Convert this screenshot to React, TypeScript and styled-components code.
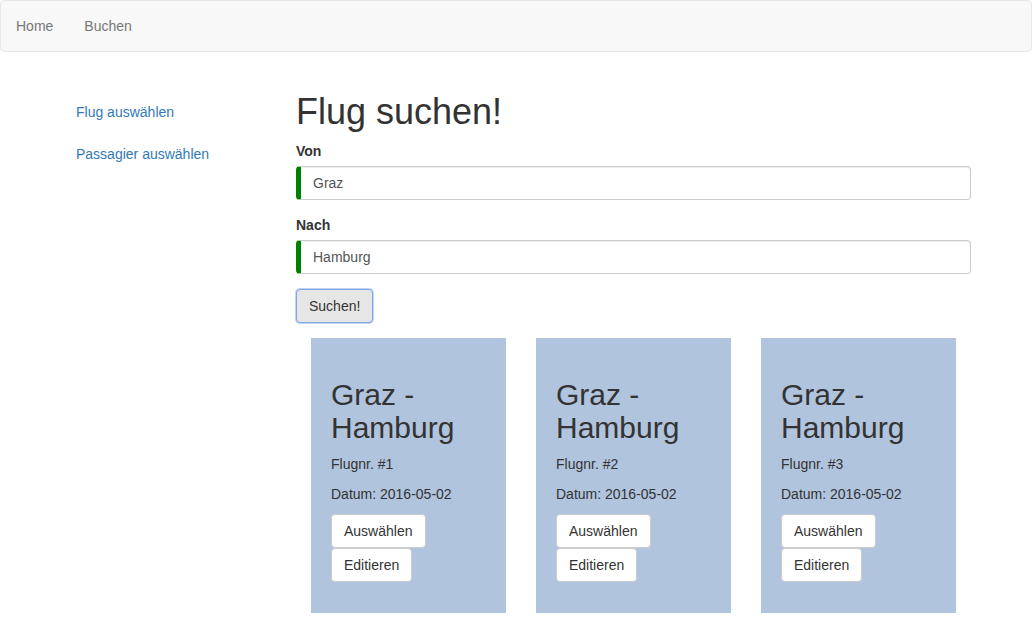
import React from "react";
import styled, { createGlobalStyle } from "styled-components";

const Global = createGlobalStyle`
  html, body { margin: 0; padding: 0; background: #fff; }
  body {
    font-family: "Liberation Sans", Arial, Helvetica, sans-serif;
    font-size: 14px;
    line-height: 1.42857143;
    color: #333;
  }
  * { box-sizing: border-box; }
`;

const Navbar = styled.nav`
  display: flex;
  align-items: stretch;
  min-height: 52px;
  background: #f8f8f8;
  border: 1px solid #e7e7e7;
  border-radius: 4px;
  margin-bottom: 20px;
`;

const NavList = styled.div`
  display: flex;
  gap: 1px;
`;

const NavLink = styled.a`
  display: block;
  padding: 15px;
  line-height: 20px;
  color: #777;
  text-decoration: none;
`;

const Layout = styled.div`
  display: grid;
  grid-template-columns: 235px 675px;
  padding-left: 61px;
`;

const Sidebar = styled.ul`
  list-style: none;
  margin: 20px 0 0;
  padding: 0;
  display: flex;
  flex-direction: column;
  gap: 2px;
`;

const PillLink = styled.a`
  display: block;
  padding: 10px 15px;
  line-height: 20px;
  color: #337ab7;
  text-decoration: none;
`;

const Main = styled.main`
  display: flex;
  flex-direction: column;
`;

const Title = styled.h1`
  font-size: 36px;
  font-weight: 500;
  line-height: 1.1;
  margin: 20px 0 9px;
`;

const FormGroup = styled.div`
  margin-bottom: 15px;
`;

const Label = styled.label`
  display: inline-block;
  margin-bottom: 5px;
  font-weight: bold;
`;

const Input = styled.input`
  display: block;
  width: 100%;
  height: 34px;
  padding: 6px 12px;
  font-family: inherit;
  font-size: 14px;
  line-height: 1.42857143;
  color: #555;
  background: #fff;
  border: 1px solid #ccc;
  border-left: 5px solid #008000;
  border-radius: 4px;
  box-shadow: inset 0 1px 1px rgba(0, 0, 0, 0.075);
  outline: none;
`;

const SearchButton = styled.button`
  align-self: flex-start;
  height: 34px;
  padding: 6px 12px;
  font-family: inherit;
  font-size: 14px;
  line-height: 1.42857143;
  color: #333;
  background: #e6e6e6;
  border: 1px solid #7ea7e8;
  border-radius: 4px;
  box-shadow: 0 0 0 1px rgba(120, 160, 230, 0.45);
`;

const Cards = styled.div`
  display: flex;
  margin-top: 15px;
`;

const Card = styled.div`
  flex: 0 0 195px;
  width: 195px;
  margin: 0 15px;
  padding: 20px 20px 21px;
  background: #b0c4de;
`;

const CardTitle = styled.h2`
  font-size: 30px;
  font-weight: 500;
  line-height: 1.1;
  margin: 20px 0 10px;
`;

const CardText = styled.p`
  margin: 0 0 10px;
`;

const CardActions = styled.div`
  display: flex;
  flex-direction: column;
  align-items: flex-start;
  margin-bottom: 10px;
`;

const CardButton = styled.button`
  height: 34px;
  padding: 6px 12px;
  font-family: inherit;
  font-size: 14px;
  line-height: 1.42857143;
  color: #333;
  background: #fff;
  border: 1px solid #ccc;
  border-radius: 4px;
`;

const flights = [1, 2, 3];

export default function App() {
  return (
    <>
      <Global />
      <Navbar>
        <NavList>
          <NavLink href="#">Home</NavLink>
          <NavLink href="#">Buchen</NavLink>
        </NavList>
      </Navbar>
      <Layout>
        <Sidebar>
          <li><PillLink href="#">Flug auswählen</PillLink></li>
          <li><PillLink href="#">Passagier auswählen</PillLink></li>
        </Sidebar>
        <Main>
          <Title>Flug suchen!</Title>
          <FormGroup>
            <Label>Von</Label>
            <Input defaultValue="Graz" />
          </FormGroup>
          <FormGroup>
            <Label>Nach</Label>
            <Input defaultValue="Hamburg" />
          </FormGroup>
          <SearchButton>Suchen!</SearchButton>
          <Cards>
            {flights.map((n) => (
              <Card key={n}>
                <CardTitle>Graz - Hamburg</CardTitle>
                <CardText>Flugnr. #{n}</CardText>
                <CardText>Datum: 2016-05-02</CardText>
                <CardActions>
                  <CardButton>Auswählen</CardButton>
                  <CardButton>Editieren</CardButton>
                </CardActions>
              </Card>
            ))}
          </Cards>
        </Main>
      </Layout>
    </>
  );
}
